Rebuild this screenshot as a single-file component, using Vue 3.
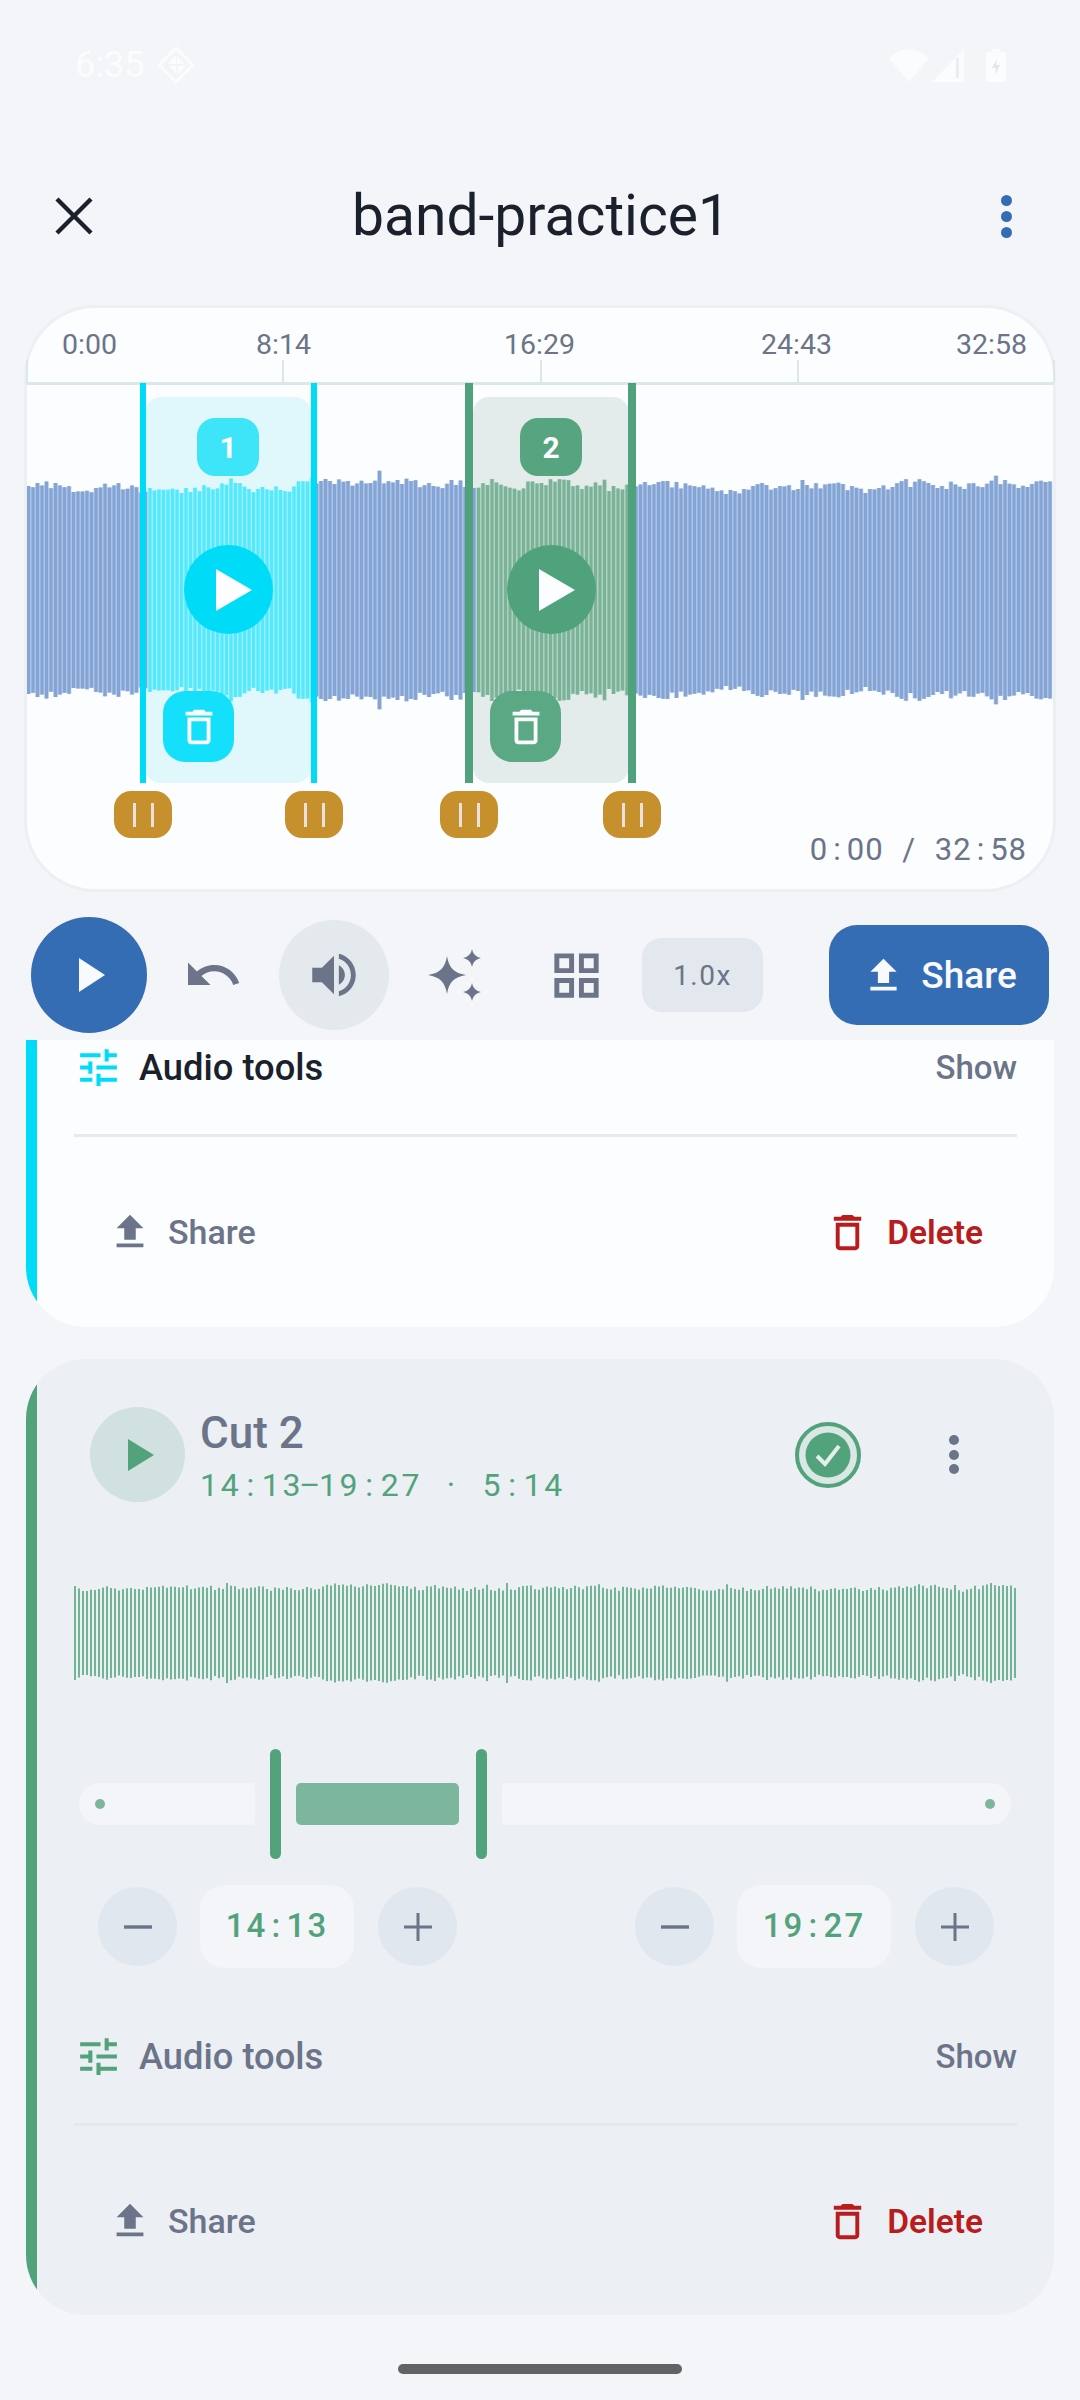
<script setup>
function rng(seed) {
  let s = seed
  return () => {
    s = (s * 16807) % 2147483647
    return s / 2147483647
  }
}

function amps(seed, n, base, spread, spike) {
  const r = rng(seed)
  const out = []
  let slow = 0
  for (let i = 0; i < n; i++) {
    slow = slow * 0.8 + (r() - 0.5) * 0.6
    let v = base + slow * spread + (r() - 0.5) * spread * 0.5
    if (r() > 0.93) v += spike * r()
    out.push(v)
  }
  return out
}

const MAIN_X = 27
const MAIN_W = 1026
const MAIN_H = 240
const PITCH = 4.5
const mainAmps = amps(48271, Math.floor(MAIN_W / PITCH), 105, 11, 9)
const groups = { blue: '', cyan: '', green: '' }
mainAmps.forEach((a, i) => {
  const x = (i * PITCH + 1.5).toFixed(1)
  const page = MAIN_X + i * PITCH
  const key = page >= 145 && page < 311 ? 'cyan' : page >= 473 && page < 629 ? 'green' : 'blue'
  groups[key] += `M${x} ${(120 - a).toFixed(1)}V${(120 + a).toFixed(1)}`
})

const CUT_W = 943
const CUT_PITCH = 4
const cutAmps = amps(90217, Math.ceil(CUT_W / CUT_PITCH), 45, 6, 5)
const cutWave = cutAmps
  .map((a, i) => `M${(i * CUT_PITCH + 1).toFixed(1)} ${(50 - a).toFixed(1)}V${(50 + a).toFixed(1)}`)
  .join('')

const ticks = [
  { label: '0:00', x: 0, lx: 36 },
  { label: '8:14', x: 256, lx: 230 },
  { label: '16:29', x: 514, lx: 478 },
  { label: '24:43', x: 771, lx: 735 },
  { label: '32:58', x: 1027, lx: 930 }
]

const regions = [
  { n: 1, kind: 'cyan', left: 118, width: 166, badge: 170, play: 157, trash: 136, lh: 113, rh: 284, hw: 6 },
  { n: 2, kind: 'green', left: 446, width: 156, badge: 493, play: 480, trash: 463, lh: 438, rh: 601, hw: 8 }
]
const px = (v) => `${v}px`
</script>

<template>
  <div class="screen">
    <header class="status">
      <div class="status-left">
        <span class="clock">6:35</span>
        <svg class="diamond" viewBox="0 0 38 38">
          <path d="M19 2 36 19 19 36 2 19Z" fill="none" stroke="#fbfcfe" stroke-width="3" />
          <path d="M19 9v9h-8zM20 10l8 8h-8zM12 20h7v7zM21 20h7l-7 8z" fill="#fbfcfe" />
        </svg>
      </div>
      <div class="status-right">
        <svg width="40" height="33" viewBox="0 0 40 33"><path d="M0 10C11-3 29-3 40 10L20 33Z" fill="#fbfcfe" /></svg>
        <svg width="32" height="33" viewBox="0 0 32 33"><path d="M0 33 32 0V33Z" fill="#fbfcfe" /><path d="M24 9h3v20h-3z" fill="#e9ecf2" /></svg>
        <svg class="batt" width="20" height="33" viewBox="0 0 20 33"><path d="M6 0h8v3h5a1 1 0 0 1 1 1v28a1 1 0 0 1-1 1H1a1 1 0 0 1-1-1V4a1 1 0 0 1 1-1h5Z" fill="#fbfcfe" /><path d="M11 10 6 19h4l-1 7 5-10h-4z" fill="#e3e6ec" /></svg>
      </div>
    </header>

    <div class="topbar">
      <svg class="close" width="38" height="38" viewBox="0 0 38 38"><path d="M2 2 36 36M36 2 2 36" stroke="#1a202c" stroke-width="4.4" fill="none" /></svg>
      <h1 class="title">band-practice1</h1>
      <div class="kebab blue"><i></i><i></i><i></i></div>
    </div>

    <section class="editor">
      <div class="ruler">
        <template v-for="t in ticks" :key="t.label">
          <span class="tick-label" :style="{ left: px(t.lx) }">{{ t.label }}</span>
          <span class="tick" :style="{ left: px(t.x) }"></span>
        </template>
      </div>

      <div
        v-for="r in regions"
        :key="'bg' + r.n"
        class="region"
        :class="r.kind"
        :style="{ left: px(r.left), width: px(r.width) }"
      ></div>

      <svg class="wave" :width="MAIN_W" :height="MAIN_H" :viewBox="`0 0 ${MAIN_W} ${MAIN_H}`">
        <path :d="groups.blue" stroke="#adc3e4" stroke-width="4.5" fill="none" />
        <path :d="groups.blue" stroke="#84a4d5" stroke-width="3" fill="none" />
        <path :d="groups.cyan" stroke="#94f0fc" stroke-width="4.5" fill="none" />
        <path :d="groups.cyan" stroke="#56e8fb" stroke-width="3" fill="none" />
        <path :d="groups.green" stroke="#aed0c1" stroke-width="4.5" fill="none" />
        <path :d="groups.green" stroke="#7ab398" stroke-width="3" fill="none" />
      </svg>

      <template v-for="r in regions" :key="r.n">
        <span class="handle" :class="r.kind" :style="{ left: px(r.lh), width: px(r.hw) }"></span>
        <span class="handle" :class="r.kind" :style="{ left: px(r.rh), width: px(r.hw) }"></span>
        <span class="grip" :style="{ left: px(r.lh + r.hw / 2 - 29) }"><i></i><i></i></span>
        <span class="grip" :style="{ left: px(r.rh + r.hw / 2 - 29) }"><i></i><i></i></span>
        <span class="badge" :class="r.kind" :style="{ left: px(r.badge) }">{{ r.n }}</span>
        <span class="region-play" :class="r.kind" :style="{ left: px(r.play) }">
          <svg width="36" height="42" viewBox="0 0 36 42"><path d="M0 0 36 21 0 42Z" fill="#fcfdff" /></svg>
        </span>
        <span class="region-trash" :class="r.kind" :style="{ left: px(r.trash) }">
          <svg width="46" height="46" viewBox="0 0 24 24"><path d="M6 19c0 1.1.9 2 2 2h8c1.100 0 2-.9 2-2V7H6v12zM8 9h8v10H8V9zm7.500-5l-1-1h-5l-1 1H5v2h14V4z" fill="#fcfdff" /></svg>
        </span>
      </template>

      <span class="position">0<b>:</b>00 / 32<b>:</b>58</span>
    </section>

    <div class="controls">
      <button class="main-play">
        <svg width="26" height="34" viewBox="0 0 26 34"><path d="M0 0 26 17 0 34Z" fill="#f8fafd" /></svg>
      </button>
      <svg class="undo" width="60" height="60" viewBox="0 0 24 24"><path d="M12.500 8c-2.650 0-5.050.99-6.900 2.600L2 7v9h9l-3.620-3.620c1.390-1.160 3.160-1.880 5.120-1.880 3.540 0 6.550 2.310 7.600 5.500l2.370-.78C21.080 11.030 17.150 8 12.500 8z" fill="#6b7488" /></svg>
      <button class="volume">
        <svg width="58" height="58" viewBox="0 0 24 24"><path d="M3 9v6h4l5 5V4L7 9H3zm13.500 3c0-1.770-1.020-3.290-2.500-4.030v8.050c1.480-.73 2.500-2.250 2.500-4.020zM14 3.230v2.060c2.890.86 5 3.540 5 6.710s-2.110 5.850-5 6.710v2.060c4.010-.91 7-4.490 7-8.770s-2.990-7.860-7-8.770z" fill="#6b7488" /></svg>
      </button>
      <svg class="sparkle" width="53" height="53" viewBox="0 0 53 53">
        <path d="M19 7C21 19 26 24 38 26 26 28 21 33 19 45 17 33 12 28 0 26 12 24 17 19 19 7Z" fill="#6b7488" />
        <path d="M44 0C45 5 48 8 53 9 48 10 45 13 44 18 43 13 40 10 35 9 40 8 43 5 44 0Z" fill="#6b7488" />
        <path d="M44 34C45 39 48 42 53 43 48 44 45 47 44 52 43 47 40 44 35 43 40 42 43 39 44 34Z" fill="#6b7488" />
      </svg>
      <svg class="grid" width="59" height="59" viewBox="0 0 24 24"><path d="M3 3v8h8V3H3zm6 6H5V5h4v4zm-6 4v8h8v-8H3zm6 6H5v-4h4v4zm4-16v8h8V3h-8zm6 6h-4V5h4v4zm-6 4v8h8v-8h-8zm6 6h-4v-4h4v4z" fill="#6b7488" /></svg>
      <button class="speed">1.0x</button>
      <button class="share-main">
        <svg width="45" height="45" viewBox="0 0 24 24"><path d="M9 16h6v-6h4l-7-7-7 7h4zm-4 2h14v2H5z" fill="#f8fafd" /></svg>
        <span>Share</span>
      </button>
    </div>

    <section class="cut cut-one">
      <span class="strip cyan"></span>
      <div class="tools">
        <svg width="49" height="49" viewBox="0 0 24 24"><path d="M3 17v2h6v-2H3zM3 5v2h10V5H3zm10 16v-2h8v-2h-8v-2h-2v6h2zM7 9v2H3v2h4v2h2V9H7zm14 4v-2H11v2h10zm-6-4h2V7h4V5h-4V3h-2v6z" fill="#00dcf8" /></svg>
        <span class="tools-label">Audio tools</span>
        <span class="show">Show</span>
      </div>
      <div class="divider"></div>
      <div class="actions">
        <span class="act share">
          <svg width="46" height="46" viewBox="0 0 24 24"><path d="M9 16h6v-6h4l-7-7-7 7h4zm-4 2h14v2H5z" fill="#6b7488" /></svg>
          Share
        </span>
        <span class="act delete">
          <svg width="47" height="47" viewBox="0 0 24 24"><path d="M6 19c0 1.100.9 2 2 2h8c1.100 0 2-.9 2-2V7H6v12zM8 9h8v10H8V9zm7.500-5l-1-1h-5l-1 1H5v2h14V4z" fill="#b91c1c" /></svg>
          Delete
        </span>
      </div>
    </section>

    <section class="cut cut-two">
      <span class="strip green"></span>
      <div class="head">
        <button class="cut-play">
          <svg width="26" height="32" viewBox="0 0 26 32"><path d="M0 0 26 16 0 32Z" fill="#52a37c" /></svg>
        </button>
        <div class="cut-text">
          <div class="cut-title">Cut 2</div>
          <div class="cut-time">14<b>:</b>13<b class="dash">–</b>19<b>:</b>27 · 5<b>:</b>14</div>
        </div>
        <svg class="check" width="66" height="66" viewBox="0 0 66 66">
          <circle cx="33" cy="33" r="31" fill="#dbe7e5" stroke="#52a37c" stroke-width="4" />
          <circle cx="33" cy="33" r="22.500" fill="#52a37c" />
          <path d="M22 34 30 42 44 24" fill="none" stroke="#e4eeeb" stroke-width="4" />
        </svg>
        <div class="kebab gray"><i></i><i></i><i></i></div>
      </div>

      <svg class="cut-wave" :width="CUT_W" height="100" :viewBox="`0 0 ${CUT_W} 100`">
        <path :d="cutWave" stroke="#72b595" stroke-width="2" fill="none" />
      </svg>

      <div class="track">
        <div class="seg seg-left"><i class="dot"></i></div>
        <span class="bar"></span>
        <div class="selected"></div>
        <span class="bar"></span>
        <div class="seg seg-right"><i class="dot"></i></div>
      </div>

      <div class="steppers">
        <div class="stepper">
          <button class="round"><svg width="28" height="28" viewBox="0 0 28 28"><path d="M0 14H28" stroke="#6b7488" stroke-width="3.400" /></svg></button>
          <span class="time-box">14<b>:</b>13</span>
          <button class="round"><svg width="28" height="28" viewBox="0 0 28 28"><path d="M0 14H28M14 0V28" stroke="#6b7488" stroke-width="3" /></svg></button>
        </div>
        <div class="stepper">
          <button class="round"><svg width="28" height="28" viewBox="0 0 28 28"><path d="M0 14H28" stroke="#6b7488" stroke-width="3.400" /></svg></button>
          <span class="time-box">19<b>:</b>27</span>
          <button class="round"><svg width="28" height="28" viewBox="0 0 28 28"><path d="M0 14H28M14 0V28" stroke="#6b7488" stroke-width="3" /></svg></button>
        </div>
      </div>

      <div class="tools tools-two">
        <svg width="49" height="49" viewBox="0 0 24 24"><path d="M3 17v2h6v-2H3zM3 5v2h10V5H3zm10 16v-2h8v-2h-8v-2h-2v6h2zM7 9v2H3v2h4v2h2V9H7zm14 4v-2H11v2h10zm-6-4h2V7h4V5h-4V3h-2v6z" fill="#52a37c" /></svg>
        <span class="tools-label muted">Audio tools</span>
        <span class="show">Show</span>
      </div>
      <div class="divider soft"></div>
      <div class="actions">
        <span class="act share">
          <svg width="46" height="46" viewBox="0 0 24 24"><path d="M9 16h6v-6h4l-7-7-7 7h4zm-4 2h14v2H5z" fill="#6b7488" /></svg>
          Share
        </span>
        <span class="act delete">
          <svg width="47" height="47" viewBox="0 0 24 24"><path d="M6 19c0 1.100.9 2 2 2h8c1.100 0 2-.9 2-2V7H6v12zM8 9h8v10H8V9zm7.500-5l-1-1h-5l-1 1H5v2h14V4z" fill="#b91c1c" /></svg>
          Delete
        </span>
      </div>
    </section>

    <div class="home"></div>
  </div>
</template>

<style>
html, body { margin: 0; background: #f3f5f9; }
</style>

<style scoped>
.screen {
  width: 1080px;
  height: 2400px;
  background: #f3f5f9;
  font-family: Roboto, "Noto Sans", sans-serif;
  overflow: hidden;
  color: #1a202c;
}
button { border: 0; padding: 0; font-family: inherit; display: flex; align-items: center; justify-content: center; }
i { display: block; }
b { font-weight: inherit; display: inline-block; }

.status {
  height: 130px;
  box-sizing: border-box;
  padding: 0 74px 0 75px;
  display: flex;
  justify-content: space-between;
  align-items: center;
}
.status-left { display: flex; align-items: center; gap: 13px; }
.clock { font-size: 36px; color: #fbfcfe; line-height: 40px; }
.diamond { width: 38px; height: 38px; }
.status-right { display: flex; align-items: center; gap: 3px; }
.batt { margin-left: 19px; }

.topbar {
  margin-top: 36px;
  height: 100px;
  padding: 0 68px 0 55px;
  display: flex;
  align-items: center;
  justify-content: space-between;
}
.title {
  margin: 0 12px 0 0;
  font-size: 57px;
  font-weight: 400;
  color: #1a202c;
  line-height: 70px;
}
.kebab { width: 11px; display: flex; flex-direction: column; gap: 5px; }
.kebab i { width: 11px; height: 11px; border-radius: 50%; }
.kebab.blue i { background: #356db5; }
.kebab.gray { margin-left: 88px; width: 10px; gap: 4.500px; }
.kebab.gray i { background: #6b7488; width: 10px; height: 10px; }

.editor {
  position: relative;
  margin: 42px 27px 0;
  height: 581px;
  background: #fcfdfe;
  border-radius: 68px;
  box-shadow: 0 0 0 3px #eceff4;
}
.ruler {
  position: absolute;
  left: -1px;
  right: -1px;
  top: 0;
  height: 74px;
  border-bottom: 3px solid #dce8e8;
}
.tick-label {
  position: absolute;
  top: 20px;
  font-size: 28.500px;
  line-height: 34px;
  color: #6b7488;
}
.tick { position: absolute; top: 52px; width: 2px; height: 22px; background: #dce8e8; }

.region {
  position: absolute;
  top: 89px;
  height: 386px;
  border-radius: 16px;
}
.region.cyan { background: #e0f8fc; }
.region.green { background: #e3ebeb; }
.wave { position: absolute; left: 0; top: 162px; }
.handle { position: absolute; top: 75px; height: 400px; }
.handle.cyan { background: #00dcf8; }
.handle.green { background: #4fa27b; }
.grip {
  position: absolute;
  top: 483px;
  width: 58px;
  height: 47px;
  box-sizing: border-box;
  border-radius: 17px;
  background: #c6902d;
  display: flex;
  justify-content: center;
  align-items: center;
  gap: 15px;
}
.grip i { width: 3px; height: 24px; background: #ece0e0; }
.badge {
  position: absolute;
  top: 110px;
  width: 62px;
  height: 58px;
  border-radius: 18px;
  display: flex;
  align-items: center;
  justify-content: center;
  color: #fcfdff;
  font-size: 30px;
  font-weight: 700;
}
.badge.cyan { background: #3ee5f9; }
.badge.green { background: #56a580; }
.region-play {
  position: absolute;
  top: 237px;
  width: 89px;
  height: 89px;
  border-radius: 50%;
  display: flex;
  align-items: center;
  justify-content: center;
  padding-left: 0;
}
.region-play svg { margin-left: 10px; }
.region-play.cyan { background: #00dcf8; }
.region-play.green { background: #4fa27b; }
.region-trash {
  position: absolute;
  top: 383px;
  width: 71px;
  height: 71px;
  border-radius: 22px;
  display: flex;
  align-items: center;
  justify-content: center;
}
.region-trash.cyan { background: #14e0fb; }
.region-trash.green { background: #5aa884; }
.position {
  position: absolute;
  right: 26px;
  top: 523px;
  font-size: 31px;
  line-height: 38px;
  letter-spacing: 1px;
  word-spacing: 10px;
  color: #6b7488;
  white-space: pre;
}
.position b { margin: 0 5px; }

.controls {
  margin-top: 28px;
  padding-left: 31px;
  height: 116px;
  margin-bottom: 7px;
  display: flex;
  align-items: center;
}
.main-play {
  width: 116px;
  height: 116px;
  border-radius: 50%;
  background: #356db5;
}
.main-play svg { margin-left: 6px; }
.undo { margin-left: 36px; }
.volume {
  margin-left: 36px;
  width: 110px;
  height: 110px;
  border-radius: 50%;
  background: #e4e9ee;
}
.sparkle { margin-left: 39px; }
.grid { margin-left: 66px; }
.speed {
  margin-left: 36px;
  width: 121px;
  height: 74px;
  border-radius: 20px;
  background: #e3e8ef;
  color: #6b7488;
  font-size: 28px;
  font-weight: 400;
  letter-spacing: 1.500px;
}
.share-main {
  margin-left: 66px;
  width: 220px;
  height: 100px;
  border-radius: 28px;
  background: #356db5;
  color: #f8fafd;
  font-size: 37px;
  font-weight: 500;
  gap: 15px;
  box-sizing: border-box;
}

.cut {
  position: relative;
  margin: 0 26px;
  overflow: hidden;
  padding: 0 37px 0 48px;
}
.cut-one {
  background: #fcfdfe;
  height: 287px;
  box-sizing: border-box;
  border-radius: 0 0 60px 60px;
}
.cut-two {
  margin-top: 32px;
  background: #eceff4;
  height: 956px;
  box-sizing: border-box;
  border-radius: 60px;
  padding-top: 48px;
}
.strip { position: absolute; left: 0; top: 0; bottom: 0; width: 11px; }
.strip.cyan { background: #00dcf8; }
.strip.green { background: #52a37c; }

.tools {
  height: 54px;
  display: flex;
  align-items: center;
}
.tools-label {
  margin-left: 16px;
  font-size: 36.300px;
  font-weight: 500;
  color: #1a202c;
}
.tools-label.muted { color: #6b7488; }
.show {
  margin-left: auto;
  font-size: 33px;
  font-weight: 500;
  color: #6b7488;
}
.tools-two { margin-top: 61px; }
.divider { margin-top: 40px; height: 3px; background: #e4ebf0; }
.divider.soft { background: #e2e9ec; }
.actions {
  margin-top: 65px;
  height: 60px;
  padding: 0 34px 0 33px;
  display: flex;
  justify-content: space-between;
  align-items: center;
}
.act {
  display: flex;
  align-items: center;
  font-size: 34px;
  font-weight: 500;
  gap: 15px;
}
.act.share { color: #6b7488; }
.act.delete { color: #b91c1c; font-weight: 600; font-size: 33.500px; gap: 16px; }

.head { height: 95px; padding-left: 16px; padding-right: 58px; display: flex; align-items: center; }
.cut-play {
  flex: none;
  width: 95px;
  height: 95px;
  border-radius: 50%;
  background: #d0e1df;
}
.cut-play svg { margin-left: 6px; }
.cut-text { margin-left: 15px; align-self: flex-start; }
.cut-title { font-size: 44px; font-weight: 500; line-height: 52px; color: #6b7488; }
.cut-time {
  margin-top: 6px;
  font-size: 32px;
  line-height: 40px;
  letter-spacing: 2.700px;
  word-spacing: 14px;
  color: #52a37c;
  white-space: pre;
}
.cut-time b { margin: 0 5px; }
.cut-time .dash { margin: 0 -4px; }
.check { margin-left: auto; flex: none; }

.cut-wave { display: block; margin-top: 81px; }

.track {
  margin-top: 66px;
  height: 110px;
  padding-left: 5px;
  display: flex;
  align-items: center;
}
.seg {
  height: 42px;
  background: #f3f5f9;
  display: flex;
  align-items: center;
  box-sizing: border-box;
}
.seg-left { width: 176px; border-radius: 21px 4px 4px 21px; padding-left: 16px; }
.seg-right { width: 509px; border-radius: 4px 21px 21px 4px; justify-content: flex-end; padding-right: 16px; }
.dot { width: 10px; height: 10px; border-radius: 50%; background: #7cb79d; }
.bar { width: 11px; height: 110px; border-radius: 6px; background: #52a37c; margin: 0 15px; flex: none; }
.selected { width: 163px; height: 42px; border-radius: 5px; background: #7cb79d; flex: none; }
.bar + .selected + .bar { margin-left: 17px; }

.steppers {
  margin-top: 26px;
  padding-left: 24px;
  display: flex;
  gap: 178px;
}
.stepper { display: flex; align-items: center; }
.round {
  width: 79px;
  height: 79px;
  border-radius: 50%;
  background: #e0e7ef;
}
.time-box {
  width: 154px;
  height: 83px;
  margin: 0 24px 0 23px;
  border-radius: 24px;
  background: #f3f5f9;
  color: #52a37c;
  font-size: 33px;
  font-weight: 500;
  letter-spacing: 2.200px;
  display: flex;
  align-items: center;
  justify-content: center;
  white-space: pre;
  box-sizing: border-box;
  padding-bottom: 3px;
}
.time-box b { margin: 0 4px; }

.home {
  margin: 49px auto 0;
  width: 284px;
  height: 10px;
  border-radius: 5px;
  background: #636366;
}
</style>
